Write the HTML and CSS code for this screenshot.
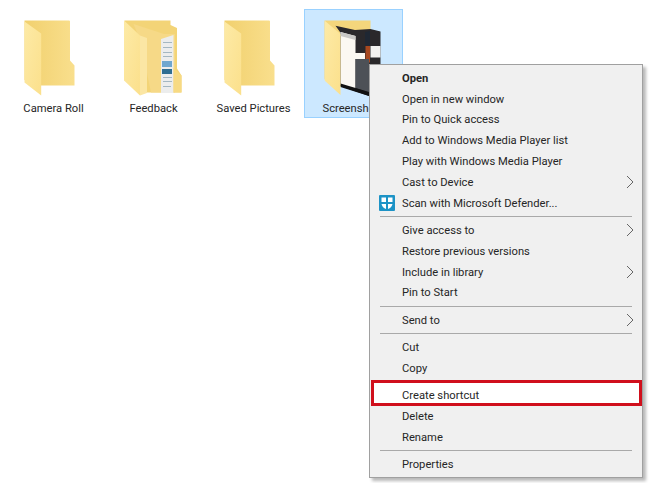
FILE: index.html
```html
<!DOCTYPE html>
<html lang="en">
<head>
<meta charset="utf-8">
<title>Folder context menu</title>
<link rel="stylesheet" href="styles.css">
</head>
<body>
<svg class="defs" width="0" height="0" aria-hidden="true">
  <defs>
    <linearGradient id="inner" x1="0" y1="0" x2="1" y2="0">
      <stop offset="0" stop-color="#f1d06e"/><stop offset="1" stop-color="#f9df8d"/>
    </linearGradient>
    <linearGradient id="flap" x1="0" y1="0" x2="1" y2="1">
      <stop offset="0" stop-color="#fdeaa6"/><stop offset="1" stop-color="#fbe08c"/>
    </linearGradient>
  </defs>
</svg>
<main class="files">
  <div class="tile">
    <svg class="folder" viewBox="0 0 64 80">
      <path fill="url(#inner)" d="M5.500 .5H50Q51 .5 51 1.500V40.500L55.500 45.500V65.500H22L5.500 60Z"/>
      <path fill="url(#flap)" d="M5.500 1.500L22.200 13.500V75.500L5.500 62.500Z"/>
    </svg>
    <span class="label">Camera Roll</span>
  </div>
  <div class="tile">
    <svg class="folder" viewBox="0 0 64 80">
      <path fill="#f3d477" d="M5.500 .5H51.500V5L58 8V48.500L62.500 55.500V72.500H22L5.500 60Z"/>
      <path fill="#f6d987" d="M14.500 4L45 14H56V72.500H32L21 20Z"/>
      <path fill="#eceded" d="M42 19L54.500 15V73H42Z"/>
      <path fill="#a4b7c2" d="M44 22H53V23H44ZM44 27H53V28H44ZM44 32H53V33H44ZM44 36H53V37H44ZM44 57H53V58H44ZM44 61H53V62H44ZM44 66H52V67H44Z"/>
      <path fill="#6fa7cf" d="M43 41H53V47H43Z"/>
      <path fill="#2f6e92" d="M43 49H53V54H43Z"/>
      <path fill="#f7da83" d="M54.500 48L62.500 55.500V72.500H54.500Z"/>
      <path fill="url(#flap)" d="M5 .5L21 15.500V75.500L5 60.500Z"/>
      <path fill="#fbe6a4" d="M21 15.500L28 18V73L21 75.500Z"/>
    </svg>
    <span class="label">Feedback</span>
  </div>
  <div class="tile">
    <svg class="folder" viewBox="0 0 64 80">
      <path fill="url(#inner)" d="M5.500 .5H50Q51 .5 51 1.500V40.500L55.500 45.500V65.500H22L5.500 60Z"/>
      <path fill="url(#flap)" d="M5.500 1.500L22.200 13.500V75.500L5.500 62.500Z"/>
    </svg>
    <span class="label">Saved Pictures</span>
  </div>
  <div class="tile is-selected">
    <svg class="folder" viewBox="0 0 64 80">
      <path fill="#f4d67c" d="M5.500 .5H51.500V12H22L5.500 60Z"/>
      <path fill="#2a282b" d="M16.500 5.800L36 10L51.500 9L61.500 11.500V60H50V76L21 66V12Z"/>
      <path fill="#fbf8f2" d="M21.500 12L36.500 16V33H46V39H36.500V71L21.500 65Z"/>
      <path fill="#c9c8c6" d="M21.500 12L36.500 16V20L21.500 16Z"/>
      <path fill="#f3f2f0" d="M51.500 26L61.500 26V37.500H51.500Z"/>
      <path fill="#1f2733" d="M46 12L51 11V26H46Z"/>
      <path fill="#a8481f" d="M46.500 26H51V42.500H46.500Z"/>
      <path fill="#4d5157" d="M36.500 39H50V72.500L36.500 68Z"/>
      <path fill="#111" d="M21.500 63.500L50 72V76L21.500 67Z"/>
      <path fill="url(#flap)" d="M5.800 .8L21.500 14V75L5.800 60.800Z"/>
    </svg>
    <span class="label">Screenshots</span>
  </div>
</main>

<nav class="menu" aria-label="Folder context menu">
  <ul class="group">
    <li class="item is-default">Open</li>
    <li class="item">Open in new window</li>
    <li class="item">Pin to Quick access</li>
    <li class="item">Add to Windows Media Player list</li>
    <li class="item">Play with Windows Media Player</li>
    <li class="item has-sub">Cast to Device<svg class="chevron" viewBox="0 0 8 14"><path d="M1 1L7 7L1 13"/></svg></li>
    <li class="item">
      <svg class="shield" viewBox="0 0 16 16">
        <rect width="16" height="16" rx="1" fill="#1d93c6"/>
        <path fill="#fff" d="M2.500 2.500H7V7H2.500ZM9 2.500H13.500V7H9ZM2.500 9H7V14Q3.500 13 2.500 9ZM9 9H13.500Q12.500 13 9 14Z"/>
      </svg>Scan with Microsoft Defender...</li>
  </ul>
  <ul class="group">
    <li class="item has-sub">Give access to<svg class="chevron" viewBox="0 0 8 14"><path d="M1 1L7 7L1 13"/></svg></li>
    <li class="item">Restore previous versions</li>
    <li class="item has-sub">Include in library<svg class="chevron" viewBox="0 0 8 14"><path d="M1 1L7 7L1 13"/></svg></li>
    <li class="item">Pin to Start</li>
  </ul>
  <ul class="group">
    <li class="item has-sub">Send to<svg class="chevron" viewBox="0 0 8 14"><path d="M1 1L7 7L1 13"/></svg></li>
  </ul>
  <ul class="group">
    <li class="item">Cut</li>
    <li class="item">Copy</li>
  </ul>
  <ul class="group">
    <li class="item is-marked">Create shortcut</li>
    <li class="item">Delete</li>
    <li class="item">Rename</li>
  </ul>
  <ul class="group">
    <li class="item">Properties</li>
  </ul>
</nav>
</body>
</html>
```
FILE: styles.css
```css
* { box-sizing: border-box; }

html, body {
  margin: 0;
  height: 483px;
  overflow: hidden;
  background: #fff;
}

body {
  position: relative;
  font-family: Roboto, "Noto Sans", sans-serif;
  font-size: 11.200px;
  color: #262626;
}

.defs { position: absolute; }

.files {
  display: flex;
  gap: 1px;
  padding: 9px 0 0 4px;
}

.tile {
  width: 99px;
  height: 109px;
  border: 1px solid transparent;
  display: flex;
  flex-direction: column;
  align-items: center;
  padding-top: 9.500px;
}

.tile.is-selected {
  background: #cce8ff;
  border-color: #99d1ff;
}

.folder {
  width: 64px;
  height: 80px;
  margin-right: 6px;
  display: block;
}

.label {
  margin-top: 1px;
  line-height: 16px;
  white-space: nowrap;
}

.menu {
  position: absolute;
  left: 369px;
  top: 64px;
  width: 274px;
  height: 414px;
  padding: 3px 2px 2px;
  background: #f0f0f0;
  border: 1px solid #a0a0a0;
  box-shadow: 3px 3px 3px rgba(0, 0, 0, 0.28);
}

.group {
  list-style: none;
  margin: 0;
  padding: 0;
}

.group + .group {
  margin-top: 2.800px;
  padding-top: 3.700px;
  position: relative;
}

.group + .group::before {
  content: "";
  position: absolute;
  top: 0;
  left: 8px;
  right: 8px;
  height: 1px;
  background: #a9a9a9;
}

.item {
  position: relative;
  height: 20.800px;
  padding-left: 30px;
  display: flex;
  align-items: center;
  white-space: nowrap;
}

.is-default { font-weight: 700; }

.chevron {
  position: absolute;
  right: 6px;
  top: 3px;
  width: 8px;
  height: 14px;
  fill: none;
  stroke: #666;
  stroke-width: 1;
}

.shield {
  position: absolute;
  left: 7px;
  top: 2px;
  width: 16px;
  height: 16px;
}

.is-marked {
  background: #fff;
  box-shadow: 0 -2px 0 #fff;
}

.is-marked::after {
  content: "";
  position: absolute;
  left: -1px;
  right: -2px;
  top: -5px;
  bottom: 0;
  border: 3px solid #d00f1c;
  pointer-events: none;
}
```
